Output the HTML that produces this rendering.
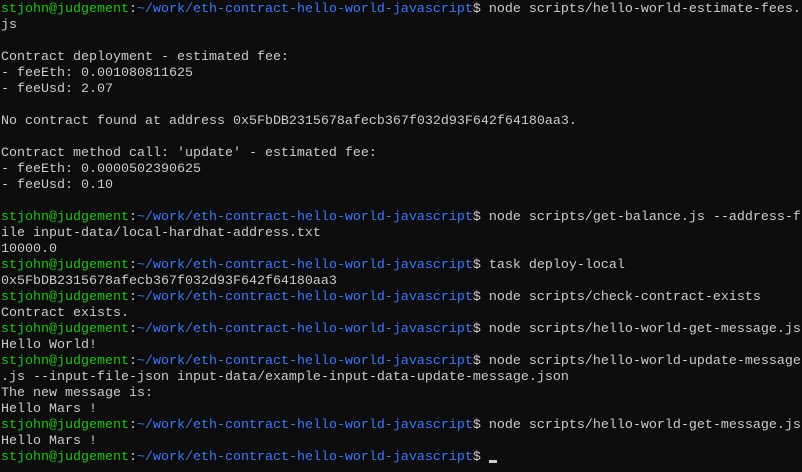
<!DOCTYPE html>
<html><head><style>
html,body{margin:0;padding:0;background:#0c0c0c;width:802px;height:472px;overflow:hidden}
pre{margin:0;padding:2px 0 0 1px;font-family:"Liberation Mono","DejaVu Sans Mono",monospace;font-size:13.33px;line-height:16px;color:#cccccc;white-space:pre;letter-spacing:0}
.g{color:#16c60c}.b{color:#3b78ff}
.c{display:inline-block;width:8px;height:3px;background:#ccc;vertical-align:-3px}
</style></head><body><pre><span class="g">stjohn@judgement</span>:<span class="b">~/work/eth-contract-hello-world-javascript</span>$ node scripts/hello-world-estimate-fees.
js

Contract deployment - estimated fee:
- feeEth: 0.001080811625
- feeUsd: 2.07

No contract found at address 0x5FbDB2315678afecb367f032d93F642f64180aa3.

Contract method call: 'update' - estimated fee:
- feeEth: 0.0000502390625
- feeUsd: 0.10

<span class="g">stjohn@judgement</span>:<span class="b">~/work/eth-contract-hello-world-javascript</span>$ node scripts/get-balance.js --address-f
ile input-data/local-hardhat-address.txt
10000.0
<span class="g">stjohn@judgement</span>:<span class="b">~/work/eth-contract-hello-world-javascript</span>$ task deploy-local
0x5FbDB2315678afecb367f032d93F642f64180aa3
<span class="g">stjohn@judgement</span>:<span class="b">~/work/eth-contract-hello-world-javascript</span>$ node scripts/check-contract-exists
Contract exists.
<span class="g">stjohn@judgement</span>:<span class="b">~/work/eth-contract-hello-world-javascript</span>$ node scripts/hello-world-get-message.js
Hello World!
<span class="g">stjohn@judgement</span>:<span class="b">~/work/eth-contract-hello-world-javascript</span>$ node scripts/hello-world-update-message
.js --input-file-json input-data/example-input-data-update-message.json
The new message is:
Hello Mars !
<span class="g">stjohn@judgement</span>:<span class="b">~/work/eth-contract-hello-world-javascript</span>$ node scripts/hello-world-get-message.js
Hello Mars !
<span class="g">stjohn@judgement</span>:<span class="b">~/work/eth-contract-hello-world-javascript</span>$ <span class="c"></span></pre></body></html>
